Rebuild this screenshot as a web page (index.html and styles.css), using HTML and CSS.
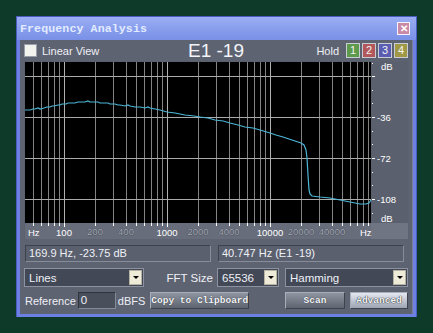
FILE: index.html
```html
<!DOCTYPE html>
<html lang="en">
<head>
  <meta charset="UTF-8" />
  <title>Frequency Analysis</title>
  <link rel="stylesheet" href="styles.css">
</head>
<body>
  <div class="window">
    <div class="titlebar">
      <span class="title">Frequency Analysis</span>
      <span class="close">&#10005;</span>
    </div>
    <div class="panel">
      <div class="toprow">
        <label class="check"><span class="box"></span>Linear View</label>
        <div class="channel">E1 -19</div>
        <div class="hold">
          <span class="hold-label">Hold</span>
          <span class="hbtn h1">1</span>
          <span class="hbtn h2">2</span>
          <span class="hbtn h3">3</span>
          <span class="hbtn h4">4</span>
        </div>
      </div>

      <div class="graph">
        <svg width="384" height="178" viewBox="0 0 384 178">
          <rect width="384" height="178" fill="#5a606e"/>
          <rect x="1" y="1" width="346" height="161" fill="#000"/>
          <rect x="1" y="162" width="346" height="16" fill="#676d7b"/>
          <rect x="347" y="162" width="37" height="16" fill="#6f7583"/>
          <!-- minor frequency lines -->
          <path stroke="#838383" stroke-width="1" fill="none"
            d="M9.5 1V162M17.5 1V162M24.5 1V162M30.5 1V162M35.5 1V162
               M71.5 1V162M89.5 1V162M102.5 1V162M112.5 1V162M120.5 1V162M127.5 1V162M133.5 1V162M138.5 1V162
               M174.5 1V162M192.5 1V162M205.5 1V162M215.5 1V162M223.5 1V162M230.5 1V162M236.5 1V162M241.5 1V162
               M277.5 1V162M295.5 1V162M308.5 1V162M318.5 1V162M326.5 1V162M333.5 1V162M339.5 1V162M344.5 1V162"/>
          <!-- decades -->
          <path stroke="#b0b0b0" stroke-width="1" fill="none" d="M40.5 1V162M143.5 1V162M246.5 1V162"/>
          <!-- dB lines -->
          <path stroke="#ababab" stroke-width="1" fill="none" d="M1 15.5H347M1 56.5H347M1 97.5H347M1 138.5H347"/>
          <!-- Hz ticks -->
          <path stroke="#fff" stroke-width="1" fill="none"
            d="M9.5 162V165M17.5 162V165M24.5 162V165M30.5 162V165M35.5 162V165M40.5 162V166
               M71.5 162V165M89.5 162V165M102.5 162V165M112.5 162V165M120.5 162V165M127.5 162V165M133.5 162V165M138.5 162V165M143.5 162V166
               M174.5 162V165M192.5 162V165M205.5 162V165M215.5 162V165M223.5 162V165M230.5 162V165M236.5 162V165M241.5 162V165M246.5 162V166
               M277.5 162V165M295.5 162V165M308.5 162V165M318.5 162V165M326.5 162V165M333.5 162V165M339.5 162V165M344.5 162V165"/>
          <!-- dB ticks -->
          <path stroke="#fff" stroke-width="1" fill="none"
            d="M348 15.5H351M348 56.5H351M348 97.5H351M348 138.5H351
               M348 29.5H349M348 42.5H349M348 70.5H349M348 83.5H349M348 111.5H349M348 124.5H349M348 152.5H349M348 2.5H349"/>
          <polyline fill="none" stroke="#4cb6d6" stroke-width="1.2"
            points="1,49 6,49 9,48 11,48 14,47 16,48 20,47 23,46 26,46 28,45 30,45 34,44 36,44 38,43 42,43 44,42 46,42 51,42 54,41 56,41 61,41 64,40 66,41 71,41 74,41 76,42 81,42 84,42 86,43 91,43 94,44 96,44 101,45 104,44 106,45 111,46 116,46 121,47 124,46 126,47 131,48 136,49 143,51 151,52 156,53 161,54 170,55 176,56 184,57 191,59 199,60 206,62 214,64 221,66 229,67 236,69 246,72 252,74 259,76 265,78 271,80 277,82 280,84 282,89 283,97 284,114 285,129 286,133 288,135 296,136 306,137 316,139 326,141 336,143 342,143 345,142 347,139"/>
          <g class="axis">
            <text x="4" y="175" class="lbl-main">Hz</text>
            <text x="40" y="175" class="lbl-main mid">100</text>
            <text x="71" y="174" class="lbl-sub mid">200</text>
            <text x="102" y="174" class="lbl-sub mid">400</text>
            <text x="143" y="175" class="lbl-main mid">1000</text>
            <text x="174" y="174" class="lbl-sub mid">2000</text>
            <text x="205" y="174" class="lbl-sub mid">4000</text>
            <text x="246" y="175" class="lbl-main mid">10000</text>
            <text x="277" y="174" class="lbl-sub mid">20000</text>
            <text x="308" y="174" class="lbl-sub mid">40000</text>
            <text x="336" y="175" class="lbl-main">Hz</text>
            <text x="357" y="9" class="lbl-main">dB</text>
            <text x="353" y="60" class="lbl-main">-36</text>
            <text x="353" y="101" class="lbl-main">-72</text>
            <text x="353" y="142" class="lbl-main">-108</text>
            <text x="357" y="161" class="lbl-main">dB</text>
          </g>
        </svg>
      </div>

      <div class="info">
        <div class="field">169.9 Hz, -23.75 dB</div>
        <div class="field">40.747 Hz (E1 -19)</div>
      </div>

      <div class="controls">
        <div class="select sel-mode"><span>Lines</span><span class="arrow"></span></div>
        <div class="ctl-label">FFT Size</div>
        <div class="select sel-fft"><span>65536</span><span class="arrow"></span></div>
        <div class="select sel-win"><span>Hamming</span><span class="arrow"></span></div>
      </div>

      <div class="bottom">
        <span class="ref-label">Reference</span>
        <div class="input">0</div>
        <span class="unit">dBFS</span>
        <button class="btn btn-copy">Copy to Clipboard</button>
        <button class="btn btn-scan">Scan</button>
        <button class="btn btn-adv">Advanced</button>
      </div>
    </div>
  </div>
</body>
</html>
```

FILE: styles.css
```css
body {
  margin: 0;
  padding: 0;
  background-color: #0e3a2a;
  font-family: 'Liberation Sans', Arial, sans-serif;
}
.window {
  margin: 17px 0 0 17px;
  width: 393px;
  height: 297px;
  border: 3px solid #6b80e2;
  border-top: none;
  box-shadow: 0 0 0 1px #4a5cc0;
  display: flex;
  flex-direction: column;
}
.titlebar {
  height: 23px;
  background: linear-gradient(#9aaef4, #7890e6);
  display: flex;
  align-items: center;
  justify-content: space-between;
  padding: 0 3px 0 1px;
  margin: 0 -3px;
}
.title {
  font-family: 'Liberation Mono', monospace;
  font-weight: bold;
  font-size: 11.6px;
  color: #e2ebff;
  letter-spacing: 0.1px;
  padding-left: 2px;
}
.close {
  width: 11px;
  height: 11px;
  border: 1px solid #f4f4ff;
  background: #c98aa8;
  color: #fff;
  font-size: 10px;
  font-weight: bold;
  line-height: 11px;
  text-align: center;
  margin-right: 3px;
}
.panel {
  flex: 1;
  background-color: #5e6371;
  border-right: 1px solid #7a8090;
  padding: 2px 3px 0 4px;
  color: #eef0f6;
  font-size: 11px;
}
.toprow {
  display: grid;
  grid-template-columns: 164px auto 1fr;
  align-items: center;
  height: 17px;
}
.check {
  display: flex;
  align-items: center;
  gap: 5px;
}
.box {
  width: 11px;
  height: 11px;
  background: #f2f2ee;
  border: 1px solid #9a9ea8;
}
.channel {
  font-size: 19px;
  color: #f2f4fa;
  line-height: 17px;
}
.hold {
  display: flex;
  justify-content: flex-end;
  align-items: center;
  gap: 2px;
  padding-right: 1px;
}
.hold-label {
  margin-right: 5px;
}
.hbtn {
  width: 12px;
  height: 13px;
  border: 1px solid #c8ccd4;
  font-size: 11px;
  line-height: 13px;
  text-align: center;
  color: #f4f4f4;
}
.h1 { background: #5d9a4c; }
.h2 { background: #b2575a; }
.h3 { background: #5b5db2; }
.h4 { background: #a09845; }
.graph {
  margin-top: 2px;
  height: 178px;
}
.graph svg {
  display: block;
}
.axis text {
  font-family: 'Liberation Sans', Arial, sans-serif;
  font-size: 9.5px;
}
.axis .mid {
  text-anchor: middle;
}
.lbl-main {
  fill: #fff;
}
.lbl-sub {
  fill: #a4aab6;
  stroke: #3c404a;
  stroke-width: 0.6px;
  paint-order: stroke;
}
.info {
  display: grid;
  grid-template-columns: 186px 186px;
  gap: 7px;
  margin-top: 6px;
  padding-left: 1px;
}
.field {
  height: 15px;
  line-height: 15px;
  padding-left: 3px;
  background: #5b606e;
  border: 1px solid #868c9a;
  border-top-color: #3e424c;
  border-left-color: #3e424c;
}
.controls {
  display: flex;
  align-items: center;
  margin-top: 6px;
  height: 19px;
}
.select {
  height: 17px;
  display: flex;
  align-items: center;
  justify-content: space-between;
  background: #434856;
  border: 1px solid #8c92a0;
  padding-left: 4px;
  font-size: 11.5px;
}
.arrow {
  width: 13px;
  height: 15px;
  margin-right: 1px;
  background: #efebd9;
  border: 1px solid #b8b4a4;
  box-sizing: border-box;
  position: relative;
}
.arrow::after {
  content: '';
  position: absolute;
  left: 3px;
  top: 5px;
  border-left: 3px solid transparent;
  border-right: 3px solid transparent;
  border-top: 3px solid #000;
}
.sel-mode { width: 114px; }
.ctl-label {
  flex: 1;
  text-align: right;
  padding-right: 4px;
  font-size: 11.5px;
}
.sel-fft { width: 56px; }
.sel-win {
  width: 117px;
  margin-left: 6px;
  margin-right: 1px;
}
.bottom {
  display: flex;
  align-items: center;
  margin-top: 5px;
  height: 17px;
  padding-left: 1px;
}
.ref-label {
  font-size: 11px;
}
.input {
  width: 34px;
  height: 15px;
  line-height: 15px;
  margin-left: 2px;
  padding-left: 2px;
  background: #4a4f5c;
  border: 1px solid #848a98;
  border-top-color: #30343c;
  border-left-color: #30343c;
  font-size: 11.5px;
}
.unit {
  margin-left: 2px;
  font-size: 11px;
}
.btn {
  height: 17px;
  padding: 0;
  font-family: 'Liberation Mono', monospace;
  font-weight: bold;
  font-size: 9.5px;
  color: #f4f6fa;
  background: linear-gradient(#8e94a0, #5e6470);
  border: 1px solid #a8aeba;
  border-right-color: #3e424c;
  border-bottom-color: #3e424c;
  text-shadow: 0 0 1px #222;
}
.btn-copy {
  width: 99px;
  margin-left: 5px;
}
.btn-scan {
  width: 60px;
  margin-left: auto;
}
.btn-adv {
  width: 58px;
  margin-left: 5px;
  margin-right: 1px;
  background: linear-gradient(#e4e8f0, #9ea4b4);
  text-shadow: 0 0 1px #222, 0 0 1px #222;
}
```
